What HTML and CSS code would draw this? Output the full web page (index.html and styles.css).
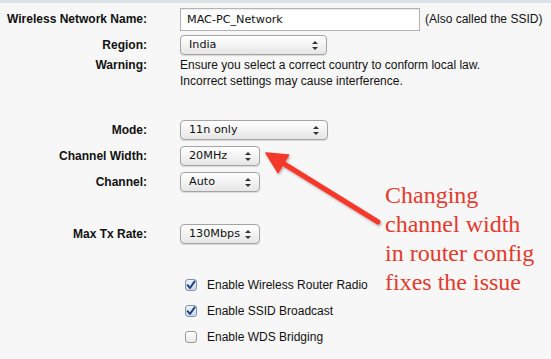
FILE: index.html
```html
<!DOCTYPE html>
<html>
<head>
<meta charset="utf-8">
<link rel="stylesheet" href="styles.css">
</head>
<body>
<div class="band"></div>
<div class="form">
  <div class="row r-name">
    <div class="label">Wireless Network Name:</div>
    <div class="ctrl">
      <div class="textbox">MAC-PC_Network</div>
      <span class="note">(Also called the SSID)</span>
    </div>
  </div>
  <div class="row r-region">
    <div class="label">Region:</div>
    <div class="ctrl"><div class="select wide"><span>India</span><i class="updown"></i></div></div>
  </div>
  <div class="row r-warn">
    <div class="label">Warning:</div>
    <div class="ctrl warntext">Ensure you select a correct country to conform local law.<br>Incorrect settings may cause interference.</div>
  </div>
  <div class="row r-mode">
    <div class="label">Mode:</div>
    <div class="ctrl"><div class="select wide2"><span>11n only</span><i class="updown"></i></div></div>
  </div>
  <div class="row">
    <div class="label">Channel Width:</div>
    <div class="ctrl"><div class="select small"><span>20MHz</span><i class="updown"></i></div></div>
  </div>
  <div class="row">
    <div class="label">Channel:</div>
    <div class="ctrl"><div class="select small"><span>Auto</span><i class="updown"></i></div></div>
  </div>
  <div class="row r-tx">
    <div class="label">Max Tx Rate:</div>
    <div class="ctrl"><div class="select small"><span>130Mbps</span><i class="updown"></i></div></div>
  </div>
  <div class="checks">
    <label class="check"><span class="box on"><svg viewBox="0 0 12 12" width="12" height="12"><path d="M2.6 6.2 L5 9 L9.6 2.4" fill="none" stroke="#1f3f78" stroke-width="1.9" stroke-linecap="round" stroke-linejoin="round"/></svg></span>Enable Wireless Router Radio</label>
    <label class="check"><span class="box on"><svg viewBox="0 0 12 12" width="12" height="12"><path d="M2.6 6.2 L5 9 L9.6 2.4" fill="none" stroke="#1f3f78" stroke-width="1.9" stroke-linecap="round" stroke-linejoin="round"/></svg></span>Enable SSID Broadcast</label>
    <label class="check"><span class="box"></span>Enable WDS Bridging</label>
  </div>
</div>
<svg class="arrow" width="551" height="359" viewBox="0 0 551 359">
  <defs>
    <filter id="sh" x="-20%" y="-20%" width="140%" height="140%">
      <feDropShadow dx="1" dy="1.5" stdDeviation="1.2" flood-color="#000" flood-opacity="0.3"/>
    </filter>
  </defs>
  <g filter="url(#sh)">
    <line x1="378" y1="222" x2="281" y2="162" stroke="#f5392b" stroke-width="5" stroke-linecap="round"/>
    <polygon points="266,153 288.5,155 278,172.5" fill="#f5392b" stroke="#f5392b" stroke-width="1.5" stroke-linejoin="round"/>
  </g>
</svg>
<div class="callout">Changing<br>channel width<br>in router config<br>fixes the issue</div>
</body>
</html>
```
FILE: styles.css
```css
html, body {
  margin: 0;
  padding: 0;
}
body {
  width: 551px;
  height: 359px;
  background: #f7f7f7;
  font-family: "Liberation Sans", Arial, sans-serif;
  font-size: 12px;
  color: #111;
  position: relative;
  overflow: hidden;
}
.band {
  height: 3px;
  background: #dbe2e7;
}
.form {
  display: flex;
  flex-direction: column;
}
.row {
  display: flex;
  align-items: center;
  height: 26px;
}
.label {
  width: 147px;
  flex: none;
  text-align: right;
  font-weight: bold;
  margin-right: 33px;
}
.ctrl {
  display: flex;
  align-items: center;
}
.r-name { margin-top: 4px; height: 24px; }
.r-region { margin-top: 2px; height: 24px; }
.r-warn { height: 32px; align-items: flex-start; line-height: 16px; }
.r-mode { margin-top: 28px; }
.r-tx { margin-top: 26px; }
.textbox {
  width: 232px;
  height: 21px;
  border: 1px solid #b4b4b4;
  background: #fff;
  padding-left: 6px;
  font-family: "DejaVu Sans", sans-serif;
  font-size: 11.2px;
  line-height: 21px;
  box-shadow: inset 0 1px 1px rgba(0,0,0,0.08);
}
.note {
  margin-left: 5px;
}
.select {
  position: relative;
  box-sizing: border-box;
  height: 20px;
  border: 1px solid #a4a4a4;
  border-radius: 4px;
  background: linear-gradient(#ffffff, #f3f3f3 50%, #e6e6e6);
  box-shadow: 0 1px 1px rgba(0,0,0,0.12);
  font-family: "DejaVu Sans", sans-serif;
  font-size: 11.2px;
  line-height: 18px;
  padding-left: 8px;
  color: #111;
}
.wide { width: 147px; }
.wide2 { width: 148px; }
.small { width: 80px; }
.updown {
  position: absolute;
  right: 8px;
  top: 5px;
  width: 6px;
  height: 9px;
}
.updown::before, .updown::after {
  content: "";
  position: absolute;
  left: 0;
  border-left: 3px solid transparent;
  border-right: 3px solid transparent;
}
.updown::before {
  top: 0;
  border-bottom: 3.5px solid #333;
}
.updown::after {
  bottom: 0;
  border-top: 3.5px solid #333;
}
.warntext {
  display: block;
}
.checks {
  margin-top: 25px;
  display: flex;
  flex-direction: column;
}
.check {
  display: flex;
  align-items: center;
  height: 26px;
  padding-left: 185px;
}
.box {
  box-sizing: border-box;
  width: 12px;
  height: 12px;
  border: 1px solid #9a9a9a;
  border-radius: 3px;
  background: linear-gradient(#ffffff, #e9e9e9);
  margin-right: 10px;
  position: relative;
  flex: none;
}
.box svg {
  position: absolute;
  left: -1px;
  top: -1px;
}
.box.on {
  border-color: #8193ad;
  background: linear-gradient(#eef3fa, #cad6e6);
}
.arrow {
  position: absolute;
  left: 0;
  top: 0;
}
.callout {
  position: absolute;
  left: 385px;
  top: 181px;
  font-family: "Liberation Serif", "Times New Roman", serif;
  font-size: 24px;
  line-height: 29px;
  color: #e4392d;
}
```
